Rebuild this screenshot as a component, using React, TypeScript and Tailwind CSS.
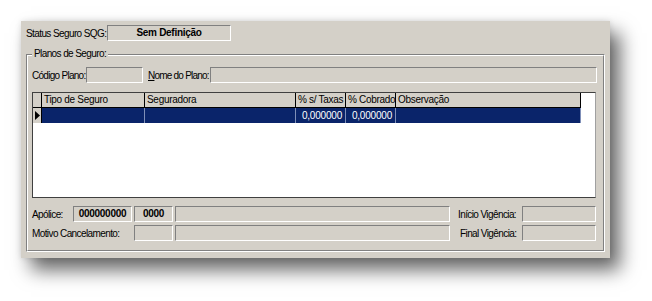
import React from 'react';

const FONT = { fontFamily: '"Liberation Sans", Arial, sans-serif' };

// campo "sunken" estilo Windows clássico
const Field: React.FC<{ w: string; bold?: boolean; center?: boolean; children?: React.ReactNode }> = ({
  w,
  bold,
  center,
  children,
}) => (
  <div
    className={`${w} h-[16px] shrink-0 border border-t-[#808080] border-l-[#808080] border-b-white border-r-white bg-[#d4d0c8] flex items-center leading-none text-black whitespace-nowrap ${
      center ? 'justify-center' : 'justify-start pl-[3px]'
    } ${bold ? 'font-bold tracking-[-0.3px]' : ''}`}
  >
    {children}
  </div>
);

const COLUNAS = [
  { label: 'Tipo de Seguro', w: 'w-[103px]', valor: '' },
  { label: 'Seguradora', w: 'w-[151px]', valor: '' },
  { label: '% s/ Taxas', w: 'w-[50px]', valor: '0,000000' },
  { label: '% Cobrado', w: 'w-[50px]', valor: '0,000000' },
  { label: 'Observação', w: 'w-[185px]', valor: '' },
];

export default function App() {
  return (
    <div className="w-[652px] h-[301px] bg-white pt-[21px] pl-[21px] overflow-hidden" style={FONT}>
      <div className="w-[589px] h-[237px] bg-[#d4d0c8] shadow-[10px_12px_18px_rgba(0,0,0,0.6),0_0_6px_rgba(0,0,0,0.12)] pt-[4px] pl-[5px] text-[10px] tracking-[-0.6px] text-black whitespace-nowrap">
        {/* Status */}
        <div className="flex items-center h-[16px]">
          <span className="w-[81px] shrink-0 overflow-hidden">Status Seguro SQG:</span>
          <Field w="w-[124px]" bold center>
            Sem Definição
          </Field>
        </div>

        {/* Group box */}
        <div className="relative mt-[13px] w-[579px] h-[198px] border border-t-[#808080] border-l-[#808080] border-b-white border-r-white">
          <div className="absolute inset-0 border border-t-white border-l-white border-b-[#808080] border-r-[#808080] pointer-events-none" />
          <span className="absolute -top-[8px] left-[5px] px-[2px] bg-[#d4d0c8] leading-[14px]">Planos de Seguro:</span>

          <div className="relative pl-[5px] pt-[12px]">
            <div className="flex items-center h-[16px]">
              <span className="w-[54px] shrink-0 tracking-[-0.72px]">Código Plano:</span>
              <Field w="w-[57px]" />
              <span className="ml-[5px] w-[62px] shrink-0 tracking-[-0.78px]">
                <span className="underline">N</span>ome do Plano:
              </span>
              <Field w="w-[387px]" />
            </div>

            {/* Grid */}
            <div className="mt-[9px] w-[564px] h-[106px] bg-white border border-t-[#404040] border-l-[#404040] border-b-[#404040] border-r-[#a0a0a0]">
              <div className="flex h-[15px]">
                <div className="w-[9px] shrink-0 bg-[#d4d0c8] border-r border-b border-black" />
                {COLUNAS.map(c => (
                  <div
                    key={c.label}
                    className={`${c.w} shrink-0 bg-[#d4d0c8] border-r border-b border-black pl-[2px] leading-[14px] overflow-hidden tracking-[-0.3px]`}
                  >
                    {c.label}
                  </div>
                ))}
              </div>
              <div className="flex h-[15px]">
                <div className="w-[9px] shrink-0 bg-[#d4d0c8] border-r border-black flex items-center justify-center">
                  <svg width="5" height="9" viewBox="0 0 5 9">
                    <path d="M0 0 L5 4.5 L0 9 Z" fill="#000" />
                  </svg>
                </div>
                {COLUNAS.map(c => (
                  <div
                    key={c.label}
                    className={`${c.w} shrink-0 bg-[#0a246a] border-r border-[#7f8fb8] text-white text-right pr-[3px] leading-[15px] tracking-[-0.2px]`}
                  >
                    {c.valor}
                  </div>
                ))}
              </div>
            </div>

            {/* Rodapé */}
            <div className="mt-[8px] flex items-center h-[16px]">
              <span className="w-[41px] shrink-0">Apólice:</span>
              <Field w="w-[59px]" bold center>
                000000000
              </Field>
              <div className="w-[2px]" />
              <Field w="w-[39px]" bold center>
                0000
              </Field>
              <div className="w-[2px]" />
              <Field w="w-[275px]" />
              <span className="ml-[8px] w-[64px] shrink-0">Início Vigência:</span>
              <Field w="w-[74px]" />
            </div>
            <div className="mt-[3px] flex items-center h-[16px]">
              <span className="w-[102px] shrink-0">Motivo Cancelamento:</span>
              <Field w="w-[39px]" />
              <div className="w-[2px]" />
              <Field w="w-[275px]" />
              <span className="ml-[10px] w-[62px] shrink-0">Final Vigência:</span>
              <Field w="w-[74px]" />
            </div>
          </div>
        </div>
      </div>
    </div>
  );
}
